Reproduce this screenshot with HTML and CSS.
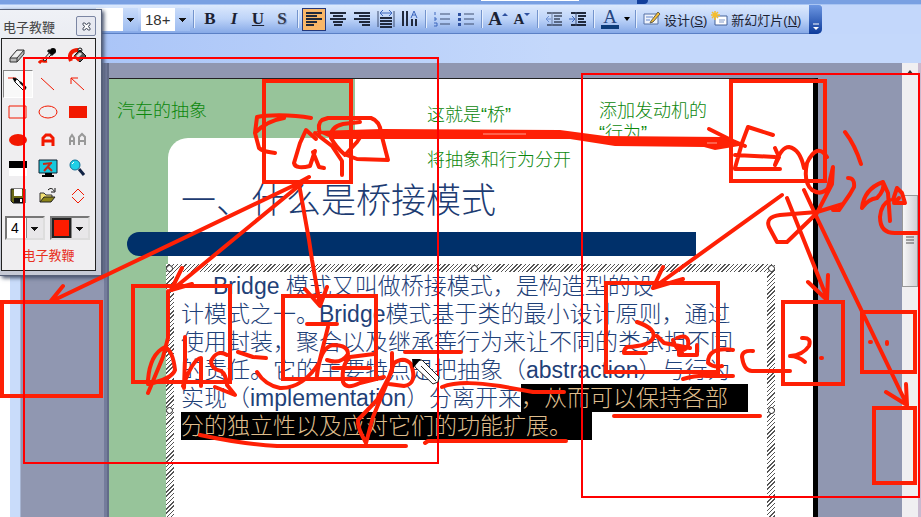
FILE: index.html
```html
<!DOCTYPE html>
<html lang="zh-CN">
<head>
<meta charset="utf-8">
<title>一、什么是桥接模式</title>
<link rel="stylesheet" href="styles.css">
</head>
<body>
<div class="app">
  <div class="menu-strip"><span class="help-box"></span><span class="menu-end"></span></div>
  <header class="toolbar-row">
    <div class="toolbar">
      <select class="combo font-name" aria-label="字体"><option></option></select>
      <select class="combo font-size" aria-label="字号"><option>18+</option></select>
      <span class="sep"></span>
      <button class="tool letter" type="button"><b>B</b></button>
      <button class="tool letter" type="button"><i>I</i></button>
      <button class="tool letter" type="button"><u>U</u></button>
      <button class="tool letter shadowed" type="button">S</button>
      <span class="sep"></span>
      <button class="tool active" type="button" aria-label="左对齐"><svg width="18" height="16"><path d="M1 2h16M1 5h11M1 8h16M1 11h11M1 14h8"/></svg></button>
      <button class="tool" type="button" aria-label="居中"><svg width="18" height="16"><path d="M1 2h16M4 5h10M1 8h16M4 11h10M5 14h8"/></svg></button>
      <button class="tool" type="button" aria-label="右对齐"><svg width="18" height="16"><path d="M1 2h16M6 5h11M1 8h16M6 11h11M9 14h8"/></svg></button>
      <button class="tool" type="button" aria-label="分散对齐"><svg width="18" height="18"><path d="M3 8h12M3 11h12M3 14h12M3 17h12"/><path class="thin" d="M1 1v16M17 1v16"/><path class="blue" d="M3 3h12M6 0L3 3l3 3M12 0l3 3-3 3"/></svg></button>
      <button class="tool" type="button" aria-label="文字方向"><svg width="18" height="18"><path d="M2 1v15M6 1v15M11 9v7M15 9v7"/><path class="blue" d="M10 8l3-7 3 7M11 5h4"/></svg></button>
      <span class="sep"></span>
      <button class="tool" type="button" aria-label="编号"><svg width="18" height="16"><path class="thin" d="M7 3h10M7 8h10M7 13h10"/><path class="blue" d="M2 1v3M1 7h2v2H1M1 12h3v3H1"/></svg></button>
      <button class="tool" type="button" aria-label="项目符号"><svg width="18" height="16"><path class="thin" d="M7 3h10M7 8h10M7 13h10"/><path class="dots" d="M1 2h3v3H1zM1 7h3v3H1zM1 12h3v3H1z"/></svg></button>
      <span class="sep"></span>
      <button class="tool letter grow" type="button">A<svg width="6" height="14"><path class="dots" d="M0 4l3-3 3 3z"/></svg></button>
      <button class="tool letter shrink" type="button">A<svg width="6" height="14"><path class="dots" d="M0 1l3 3 3-3z"/></svg></button>
      <span class="sep"></span>
      <button class="tool faded" type="button" aria-label="减少缩进"><svg width="18" height="16"><path d="M2 2h15M9 5h8M9 8h6M9 11h8M2 14h15"/><path class="thin" d="M7 1v14"/><path class="blue" d="M6 8H1M4 5L1 8l3 3"/></svg></button>
      <button class="tool" type="button" aria-label="增加缩进"><svg width="18" height="16"><path d="M2 2h15M9 5h8M9 8h6M9 11h8M2 14h15"/><path class="thin" d="M7 1v14"/><path class="blue" d="M0 8h5M3 5l3 3-3 3"/></svg></button>
      <span class="sep"></span>
      <button class="tool letter color" type="button">A</button>
      <button class="drop" type="button" aria-label="字体颜色"><svg width="6" height="4"><path d="M0 0h6L3 4z"/></svg></button>
      <span class="sep"></span>
      <button class="wide" type="button"><svg width="18" height="16" viewBox="0 0 18 16"><path d="M1 3h14v10H1z" fill="#eef3fc" stroke="#5570a5"/><path d="M3 6h7M3 9h4" stroke="#6487cb"/><path d="M8 10l7-9 2 2-7 8-3 1z" fill="#f4bd38" stroke="#66624e"/></svg><span>设计(<u>S</u>)</span></button>
      <button class="wide" type="button"><svg width="18" height="16" viewBox="0 0 18 16"><path d="M5 5h12v9H5z" fill="#fff" stroke="#45629a"/><path d="M9 9h6M9 11h5" stroke="#7e98c9"/><path d="M5 0v9M1 4h9M2 1l6 6M8 1L2 7" stroke="#f5bd2c" stroke-width="1.5"/></svg><span>新幻灯片(<u>N</u>)</span></button>
      <button class="toolbar-end" type="button" aria-label="工具栏选项"><svg width="8" height="8"><path d="M1 1h6" stroke="#fff"/><path d="M1 4h6L4 7z" fill="#fff"/></svg></button>
    </div>
  </header>
  <div class="band"></div>
  <main class="workspace">
    <aside class="outline"><div class="page-edge"></div><div class="outline-scroll"></div></aside>
    <article class="slide">
      <div class="slide-top"></div>
      <div class="slide-main">
        <h1>一、什么是桥接模式</h1>
        <div class="rule"></div>
        <section class="text-box">
          <i class="handle tl"></i><i class="handle tc"></i><i class="handle tr"></i><i class="handle ml"></i><i class="handle mr"></i>
          <div class="text-body">
            <p class="first">Bridge 模式又叫做桥接模式，是构造型的设</p>
            <p>计模式之一。Bridge模式基于类的最小设计原则，通过</p>
            <p>使用封装，聚合以及继承等行为来让不同的类承担不同</p>
            <p>的责任。它的主要特点是把抽象（abstraction）与行为</p>
            <p>实现（implementation）分离开来<mark>，从而可以保持各部</mark></p>
            <p><mark class="tail">分的独立性以及应对它们的功能扩展。</mark></p>
          </div>
        </section>
      </div>
    </article>
    <div class="scrollbar"><svg class="arrow" width="8" height="6"><path d="M0 6l4-5 4 5z" fill="#333"/></svg><div class="thumb"><svg width="8" height="10"><path d="M0 1h8M0 4h8M0 7h8" stroke="#555"/></svg></div></div>
  </main>

  <section class="palette">
    <div class="palette-title"><span>电子教鞭</span><button type="button" aria-label="关闭"><svg width="9" height="9" viewBox="0 0 9 9"><path d="M1 1h2l1.500 2L6 1h2v2L6 4.500 8 6v2H6L4.500 6 3 8H1V6l2-1.500L1 3z" fill="#fff" stroke="#4e5666"/></svg></button></div>
    <div class="palette-body">
      <div class="tools">
        <button type="button" aria-label="橡皮"><svg width="20" height="18"><path d="M2 11L9 3h7v4l-7 8H2z" fill="#bbb" stroke="#333"/><path d="M3 11l6-7h6l-6 7z" fill="#eee"/><path d="M2 11h7l7-8M9 11v4" fill="none" stroke="#333"/></svg></button>
        <button type="button" aria-label="吸管"><svg width="20" height="18"><path d="M1 16c3-4 3-1 8-2" stroke="#f21800" stroke-width="3" fill="none"/><path d="M5 13l7-8 2 2-7 7z" fill="#ddd" stroke="#222"/><path d="M10 3l5 5" stroke="#111" stroke-width="3"/><circle cx="15" cy="4" r="3"/></svg></button>
        <button type="button" aria-label="填充"><svg width="20" height="18"><path d="M3 14C0 7 4 3 10 3" fill="none" stroke="#f21800" stroke-width="4"/><path d="M6 9l6-6 6 6-6 6z" fill="#555" stroke="#111"/><path d="M8 9l4-4 2 2-4 4z" fill="#ddd"/><path d="M6 9l5 5" stroke="#f21800" stroke-width="2"/><circle cx="12" cy="3" r="2" fill="none" stroke="#111"/></svg></button>
        <button class="pressed" type="button" aria-label="画笔"><svg width="20" height="18"><path d="M0 3h8" stroke="#f21800"/><path d="M5 3l4 1 9 9-2 3-9-9z" fill="#fff" stroke="#111"/><path d="M5 3l4 1-2 3z"/><path d="M12 7l6 6" stroke="#111" stroke-width="2"/></svg></button>
        <button type="button" aria-label="直线"><svg width="20" height="18"><path d="M3 3l13 12" stroke="#f21800"/></svg></button>
        <button type="button" aria-label="箭头"><svg width="20" height="18"><path d="M16 15L3 3h7M3 3v6" fill="none" stroke="#f21800"/></svg></button>
        <button type="button" aria-label="矩形"><svg width="20" height="18"><path d="M1 3h17v12H1z" fill="none" stroke="#f21800"/></svg></button>
        <button type="button" aria-label="椭圆"><svg width="20" height="18"><ellipse cx="10" cy="9" rx="9" ry="6" fill="none" stroke="#f21800"/></svg></button>
        <button type="button" aria-label="实心矩形"><svg width="20" height="18"><path d="M1 3h18v12H1z" fill="#f21800"/></svg></button>
        <button type="button" aria-label="实心椭圆"><svg width="20" height="18"><ellipse cx="10" cy="9" rx="9" ry="6" fill="#f21800"/></svg></button>
        <button type="button" aria-label="文字"><svg width="20" height="18"><path d="M5 15V7l3-3h4l3 3v8M5 10h10" fill="none" stroke="#f21800" stroke-width="3"/></svg></button>
        <button type="button" aria-label="字号"><svg width="20" height="18"><path d="M2 14V7l2-3 2 3v7M2 10h4M11 14V6l3-3 3 3v8M11 10h6" fill="none" stroke="#999" stroke-width="2"/></svg></button>
        <button type="button" aria-label="黑白板"><svg width="20" height="18"><path d="M1 2h18v7H1z"/><path d="M1 9h18v8H1z" fill="#fff"/></svg></button>
        <button type="button" aria-label="屏幕"><svg width="20" height="18"><path d="M1 1h18v13H1z" fill="#18c8dc" stroke="#123" stroke-width="1"/><path d="M5 5l9-1M13 4L6 12M9 7l5 5" stroke="#c52a18" stroke-width="2" fill="none"/><path d="M7 14h7v2H7zM4 16h12v2H4z"/></svg></button>
        <button type="button" aria-label="放大镜"><svg width="20" height="18"><path d="M11 10l5 6" stroke="#124" stroke-width="3"/><circle cx="7" cy="6" r="5" fill="#20cfe6" stroke="#166f96"/><path d="M4 5l2-2" stroke="#fff"/></svg></button>
        <button type="button" aria-label="保存"><svg width="20" height="18"><path d="M3 2h14v14H5l-2-2z" fill="#6d6b17" stroke="#111"/><path d="M6 2h8v7H6z" fill="#fff"/><path d="M6 11h9v5H6z" fill="#111"/><path d="M12 12h2v3h-2z" fill="#fff"/></svg></button>
        <button type="button" aria-label="打开"><svg width="20" height="18"><path d="M2 15V6h4l2 2h6v3" fill="#f1df73" stroke="#333"/><path d="M2 15l4-5h11l-4 5z" fill="#8d8519" stroke="#222"/><path d="M10 3c3-3 5-1 6 1M13 5h4V1" fill="none" stroke="#111"/></svg></button>
        <button type="button" aria-label="翻页"><svg width="20" height="18"><path d="M4 8l6-6 6 6M4 10l6 6 6-6" fill="none" stroke="#f21800"/></svg></button>
      </div>
      <div class="choices">
        <select class="pick" aria-label="粗细"><option>4</option></select>
        <select class="pick swatch" aria-label="颜色"><option></option></select>
      </div>
      <div class="palette-name">电子教鞭</div>
    </div>
  </section>

  <p class="note n1">汽车的抽象</p>
  <p class="note n2">这就是“桥”</p>
  <p class="note n3">将抽象和行为分开</p>
  <p class="note n4">添加发动机的<br>“行为”</p>

  <svg class="ink" width="921" height="517" viewBox="0 0 921 517" aria-hidden="true">
    <g class="boxes">
      <rect x="264" y="81" width="87" height="101"/><rect x="731" y="81" width="94" height="100"/>
      <rect x="2" y="302" width="99" height="94"/><rect x="133" y="286" width="97" height="96"/>
      <rect x="283" y="296" width="93" height="83"/><rect x="606" y="283" width="112" height="89"/>
      <rect x="783" y="302" width="60" height="82"/><rect x="862" y="312" width="53" height="60"/>
      <rect x="874" y="408" width="41" height="75"/>
    </g>
    <path class="bridge" d="M315 131L382 129 560 130 605 136 722 137 745 145 715 150 704 147 615 146 570 139 333 139z"/>
    <path class="gap" d="M483 134h43M707 143h10"/>
    <g class="pen">
      <path d="M709 129L733 141 745 146"/>
      <path d="M311 118C290 114 265 115 257 117L255 133 259 148C263 152 268 152 275 153M255 133Q266 121 284 118"/>
      <path d="M316 139L306 130 300 143 294 163C295 168 302 168 310 166L315 151M313 152L319 167 324 168"/>
      <path d="M320 133Q317 124 322 120L328 118H371Q380 121 381 133L388 160 357 159 344 154Q336 147 331 138Q330 127 343 124L360 122M315 133L332 146 342 161V175M345 155L357 142 363 133"/>
      <path d="M299 183L50 302M63 286L50 302H73M301 184L172 290M182 268L171 290 192 284M298 183L309 177M299 184L309 240 312 260 320 305M305 289L320 306 327 287"/>
      <path d="M168 291V338L163 357 148 393M148 380Q150 354 165 347Q173 351 175 370Q172 379 148 384M185 337V360L184 388M183 386Q193 359 201 358V386M227 355Q217 349 211 361Q211 369 221 371Q226 374 227 385L235 395 215 387M238 352L253 357 266 358"/>
      <path d="M307 324H337M328 327L319 363Q302 389 280 388Q265 385 257 372M317 376Q320 347 333 345Q348 345 348 354Q341 365 327 360M374 354L350 357Q341 365 343 382Q346 390 360 383L384 377M333 368H370M392 353V371L377 400 358 420Q357 427 366 443L373 417 387 383 394 363Q404 356 411 364Q418 384 404 386L389 384"/>
      <path d="M405 352H461M442 387C458 381 479 383 500 386L533 392H564M200 435Q242 444 277 446H406M425 443L428 441H566M614 416H760"/>
      <path d="M637 322Q657 329 653 338Q650 346 627 347Q624 349 624 353H646M657 336L664 343 690 348M673 340Q676 350 682 352M677 338Q690 333 688 346Q684 352 679 349V355H696M697 345V355M733 350Q708 346 708 363Q714 368 722 366M683 379Q698 375 707 376H733M753 351Q742 350 742 357Q744 371 752 371H790"/>
      <path d="M802 338Q812 337 809 346Q803 355 790 356Q798 356 805 362M821 358h1M870 342h1M887 342v2"/>
      <path d="M782 195L653 288M663 267L653 288 683 279M787 198L827 298M808 282L827 300 828 275M804 190L818 220 907 405M886 392L907 405 906 384"/>
      <path d="M773 135L748 127 742 143 735 168M735 155L775 157M735 169H780M775 148L779 157 775 165Q781 147 789 147Q800 149 804 168M827 157Q817 142 807 163Q803 182 812 190Q821 196 828 188L833 167 832 184 818 211M845 132Q855 145 861 164M848 178Q855 178 854 187L850 194 839 210H833M817 212L843 204M817 212L780 215Q765 217 769 227L777 242H787L817 213"/>
      <path d="M862 208Q864 189 883 182Q885 190 877 198Q868 199 862 208M883 182L888 193 890 221M893 200L897 188 902 193 905 203H894L899 198M890 200Q881 204 880 217Q880 233 895 233H918"/>
    </g>
    <g class="frames"><rect x="24" y="58" width="414" height="405"/><rect x="582" y="74" width="337" height="423"/></g>
    <path class="cursor" d="M414 361l8-1 17 17-1 5-5 2-18-17z"/>
    <path d="M412 359h9l-8 9z"/>
    <path class="cursor-line" d="M421 366l15 15"/>
  </svg>
</div>
</body>
</html>
```
FILE: styles.css
```css
* { box-sizing: border-box; }
body {
  margin: 0;
  font-family: "Liberation Sans", "Noto Sans CJK SC", sans-serif;
  overflow: hidden;
}
button, select { font: inherit; color: inherit; margin: 0; padding: 0; border: 0; background: none; }
select { appearance: none; border-radius: 0; }
svg { display: block; flex: none; }
p, h1 { margin: 0; }

.app { position: relative; display: flex; flex-direction: column; min-height: 100vh; background: #c3d7fb; }

.menu-strip { height: 5px; flex: none; display: flex; background: #79a0e2; padding-left: 481px; border-bottom: 1px solid #a9c5f3; }
.help-box { width: 98px; height: 1px; background: #fff; }
.menu-end { width: 11px; height: 4px; margin-left: 58px; background: #123f9c; border-radius: 0 0 4px 0; }

.toolbar-row { display: flex; }
.toolbar {
  display: flex; align-items: center; height: 29px; padding-left: 96px; color: #1b2233;
  background: linear-gradient(#dce9fd, #bdd3f8 50%, #86a9e7);
  border-bottom: 1px solid #5b80c5; border-radius: 0 0 5px 0;
}
.combo {
  height: 23px; font-size: 15px; color: #333; padding-left: 4px;
  background:
    linear-gradient(#111, #111) right 4px top 10px / 7px 1px no-repeat,
    linear-gradient(#111, #111) right 5px top 11px / 5px 1px no-repeat,
    linear-gradient(#111, #111) right 6px top 12px / 3px 1px no-repeat,
    linear-gradient(#111, #111) right 7px top 13px / 1px 1px no-repeat,
    linear-gradient(#c9dcfa, #9dbcf0) right / 15px 100% no-repeat, #fff;
}
.combo.font-name { width: 42px; margin-right: 3px; }
.combo.font-size { width: 49px; }
.sep { width: 2px; height: 18px; margin: 0 3px; background: #7494cd; border-right: 1px solid #e6effd; }
.tool { width: 24px; height: 23px; display: flex; align-items: center; justify-content: center; }
.tool svg path { fill: none; stroke: #20293c; stroke-width: 2; }
.tool svg .blue { stroke: #3c67bd; stroke-width: 1; }
.tool svg .thin { stroke: #3f4f70; stroke-width: 1; }
.tool svg .dots { fill: #2f51a0; stroke: none; }
.tool.active { background: #f9b768; border: 1px solid #23387c; }
.tool.faded { opacity: 0.6; }
.letter { font-family: "Liberation Serif", serif; font-size: 17px; font-weight: bold; }
.letter.shadowed { color: #333a4c; text-shadow: 1px 1px #8ea7d4; }
.letter.grow { font-size: 19px; }
.letter.shrink { font-size: 15px; }
.letter.color { height: 20px; width: 18px; margin: 0 3px; font-weight: normal; font-size: 19px; line-height: 16px; align-items: flex-start; color: #26467f; border-bottom: 4px solid #0c3c7a; }
.drop { width: 10px; display: flex; justify-content: center; }
.wide { display: flex; align-items: center; gap: 3px; font-size: 13px; margin-left: 3px; white-space: nowrap; }
.toolbar-end {
  width: 13px; height: 29px; margin-left: 8px; display: flex; align-items: flex-end; justify-content: center;
  padding-bottom: 3px; background: linear-gradient(#6d97e2, #0d3b9b); border-radius: 0 3px 5px 0;
}
.band { height: 29px; background: linear-gradient(90deg, #a5c1f7, #c4d8fb 60%); }

.workspace { flex: 1; display: flex; background: #9097b1; border-right: 3px solid #c9b9cf; }
.outline { width: 109px; flex: none; display: flex; border-right: 2px solid #626b88; background: linear-gradient(90deg, #9097b1 104px, #747c9b 104px); }
.page-edge { width: 10px; background: #fff; }
.outline-scroll { width: 11px; background: #c9dcfa; border-right: 1px solid #a6b4d2; }

.slide {
  flex: 1; margin: 15px 86px 0 0; border-top: 1px solid #222; border-right: 5px solid #000;
  background: linear-gradient(#97c49a, #97c49a) 0 0 / 246px 80px no-repeat, linear-gradient(90deg, #97c49a 59px, #fff 59px);
}
.slide-top { height: 59px; }
.slide-main { margin-left: 59px; background: #fff; border-top-left-radius: 20px; height: calc(100% - 59px); display: flex; flex-direction: column; }
h1 { padding: 38px 0 0 13px; height: 94px; font-size: 35px; line-height: 50px; font-weight: 300; color: #1d3c72; }
.rule { height: 24px; flex: none; margin: 0 117px 0 -41px; background: #00306a; border-radius: 12px 0 0 12px; }
.text-box {
  position: relative; flex: 1; margin: 8px 38px 0 -2px; padding: 8px 8px 0;
  background: repeating-linear-gradient(135deg, #fff 0 2px, #555 2px 3px);
}
.text-body { background: #fff; height: 100%; padding: 0 0 0 7px; font-size: 23px; line-height: 28px; font-weight: 300; color: #1f4178; white-space: nowrap; }
.text-body p { height: 28px; }
.text-body .first { padding-left: 32px; }
mark { display: inline-block; height: 28px; background: #000; color: #dfbd8c; padding-right: 20px; }
.handle { position: absolute; width: 7px; height: 7px; border: 1px solid #222; border-radius: 50%; background: #fff; }
.tl { left: 0; top: 1px; }
.tc { left: 50%; top: 1px; }
.tr { right: 0; top: 1px; }
.ml { left: 0; top: 143px; }
.mr { right: 0; top: 143px; }

.scrollbar { width: 16px; flex: none; margin-left: -2px; background: #f0eff1; }
.scrollbar .arrow { margin: 6px auto 0; }
.thumb { margin-top: 120px; height: 92px; display: flex; align-items: center; justify-content: center; background: linear-gradient(90deg, #f7f7f7, #d0d0d5); border: 1px solid #999; }

.palette {
  position: absolute; left: 0; top: 9px; width: 102px; padding: 4px 5px 4px 1px;
  background: linear-gradient(#eff1f6, #c5c9d5); border: 1px solid #566078; border-left: 0;
  box-shadow: 2px 2px 4px #44506a;
}
.palette-title { display: flex; justify-content: space-between; align-items: center; height: 24px; padding-left: 2px; font-size: 13px; color: #444; }
.palette-title button { width: 20px; height: 20px; display: flex; align-items: center; justify-content: center; background: #e7e9f1; border: 1px solid #7b86a3; border-radius: 2px; }
.palette-body { background: #efeef0; border: 1px solid #222; padding: 3px 1px 4px; }
.tools { display: grid; grid-template-columns: repeat(3, 30px); grid-auto-rows: 28px; }
.tools button { display: flex; align-items: center; justify-content: center; }
.tools .pressed { background: #f8f8f8; border: 1px solid #888; border-right-color: #fff; border-bottom-color: #fff; }
.choices { display: flex; gap: 5px; padding: 6px 2px; }
.pick {
  width: 40px; height: 24px; padding-left: 4px; font-size: 14px; border: 2px solid; border-color: #777 #ddd #ddd #777;
  background:
    linear-gradient(#111, #111) right 5px top 9px / 7px 1px no-repeat,
    linear-gradient(#111, #111) right 6px top 10px / 5px 1px no-repeat,
    linear-gradient(#111, #111) right 7px top 11px / 3px 1px no-repeat,
    linear-gradient(#111, #111) right 8px top 12px / 1px 1px no-repeat,
    linear-gradient(90deg, #888 1px, #e8e7e9 1px) right / 17px 100% no-repeat, #fff;
}
.pick.swatch {
  background:
    linear-gradient(#111, #111) right 5px top 9px / 7px 1px no-repeat,
    linear-gradient(#111, #111) right 6px top 10px / 5px 1px no-repeat,
    linear-gradient(#111, #111) right 7px top 11px / 3px 1px no-repeat,
    linear-gradient(#111, #111) right 8px top 12px / 1px 1px no-repeat,
    linear-gradient(90deg, #888 1px, #e8e7e9 1px) right / 17px 100% no-repeat,
    linear-gradient(#fd1c00, #fd1c00) 2px 2px / 15px 16px no-repeat, #222;
}
.palette-name { text-align: center; font-size: 13px; line-height: 20px; color: #e8301d; }

.note { position: absolute; font-size: 18px; line-height: 22px; font-weight: 300; color: #0b870b; white-space: nowrap; }
.n1 { left: 117px; top: 100px; }
.n2 { left: 427px; top: 104px; }
.n3 { left: 427px; top: 149px; }
.n4 { left: 599px; top: 100px; }

.ink { position: absolute; left: 0; top: 0; pointer-events: none; }
.frames { fill: none; stroke: #f00; stroke-width: 2; }
.boxes { fill: none; stroke: #fe2005; stroke-width: 4; }
.pen { fill: none; stroke: #fe2005; stroke-width: 4; stroke-linecap: round; stroke-linejoin: round; }
.bridge { fill: #fe2005; }
.gap { stroke: #ffa090; stroke-width: 1; }
.cursor { fill: #fff; stroke: #222; }
.cursor-line { stroke: #222; stroke-width: 1; }
```
